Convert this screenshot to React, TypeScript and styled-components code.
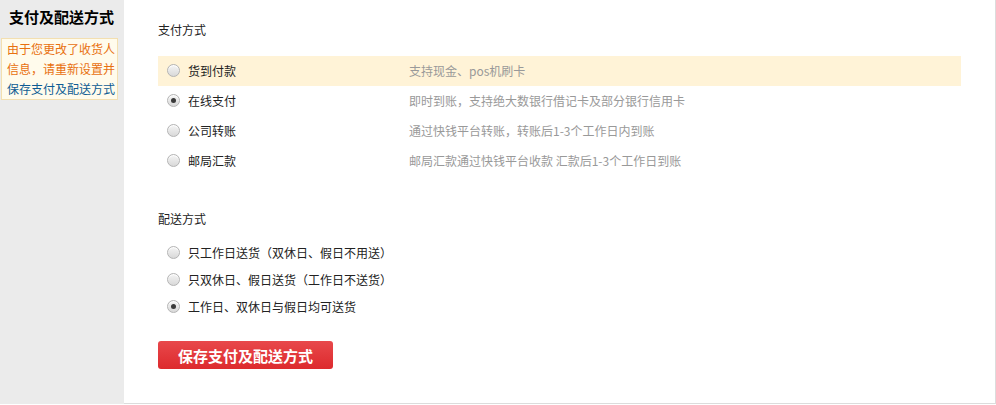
import * as React from 'react';
import { FC } from 'react';
import styled, { createGlobalStyle } from 'styled-components';

const GlobalStyle = createGlobalStyle`
    html, body {
        margin: 0;
        padding: 0;
        background: #fff;
    }
    body {
        font-family: "Noto Sans CJK SC", "Liberation Sans", sans-serif;
        font-size: 12px;
        color: #333;
    }
`;

const Page = styled.div`
    display: flex;
    width: 996px;
    height: 404px;
`;

const Sidebar = styled.aside`
    width: 124px;
    flex-shrink: 0;
    background: #ebebeb;
    display: flex;
    flex-direction: column;
    align-items: flex-start;
`;

const SideTitle = styled.h2`
    margin: 0;
    padding: 6px 0 0 9px;
    height: 32px;
    box-sizing: border-box;
    font-size: 15px;
    font-weight: bold;
    line-height: 22px;
    color: #000;
`;

const Notice = styled.div`
    margin: 6px 0 0 1px;
    width: 117px;
    box-sizing: border-box;
    padding: 0 0 0 5px;
    background: #fffbec;
    border: 1px solid #f3dfb0;
    font-size: 12px;
    line-height: 20px;
    color: #e8700f;

    .blue {
        color: #0e5b93;
    }
`;

const Main = styled.main`
    flex: 1;
    background: #fff;
    border-right: 1px solid #dcdcdc;
    border-bottom: 1px solid #dcdcdc;
    padding: 20px 34px 0;
`;

const SectionTitle = styled.h3<{ $gap: number }>`
    margin: ${ p => p.$gap }px 0 0;
    font-size: 12px;
    font-weight: normal;
    line-height: 20px;
    color: #222;
`;

const OptionList = styled.div<{ $top: number }>`
    margin-top: ${ p => p.$top }px;
    display: flex;
    flex-direction: column;
`;

const Option = styled.label<{ $height: number; $active?: boolean }>`
    display: flex;
    align-items: center;
    height: ${ p => p.$height }px;
    padding-left: 9px;
    padding-bottom: 2px;
    box-sizing: border-box;
    background: ${ p => p.$active ? '#fff3d7' : 'transparent' };
    cursor: pointer;
`;

const Radio = styled.span<{ $checked?: boolean }>`
    width: 11px;
    height: 11px;
    border-radius: 50%;
    border: 1px solid #b4b4b4;
    background: linear-gradient(#f4f4f4, #d9d9d9);
    box-shadow: inset 0 1px 1px #fff;
    display: flex;
    align-items: center;
    justify-content: center;
    flex-shrink: 0;

    &::after {
        content: '';
        display: ${ p => p.$checked ? 'block' : 'none' };
        width: 5px;
        height: 5px;
        border-radius: 50%;
        background: #3a3a3a;
    }
`;

const Label = styled.span`
    margin-left: 8px;
    width: 221px;
    color: #222;
`;

const Desc = styled.span`
    color: #999;
`;

const SaveButton = styled.button`
    margin-top: 20px;
    width: 175px;
    height: 28px;
    border: none;
    border-radius: 3px;
    background: linear-gradient(#e8484b, #dd2a2d);
    color: #fff;
    font-family: "Noto Sans CJK SC", sans-serif;
    font-size: 15px;
    font-weight: bold;
    cursor: pointer;
`;

const payments = [
    { label: '货到付款', desc: '支持现金、pos机刷卡', active: true },
    { label: '在线支付', desc: '即时到账，支持绝大数银行借记卡及部分银行信用卡', checked: true },
    { label: '公司转账', desc: '通过快钱平台转账，转账后1-3个工作日内到账' },
    { label: '邮局汇款', desc: '邮局汇款通过快钱平台收款 汇款后1-3个工作日到账' },
];

const deliveries = [
    { label: '只工作日送货（双休日、假日不用送）' },
    { label: '只双休日、假日送货（工作日不送货）' },
    { label: '工作日、双休日与假日均可送货', checked: true },
];

const App: FC = () => (
    <>
        <GlobalStyle/>
        <Page>
            <Sidebar>
                <SideTitle>支付及配送方式</SideTitle>
                <Notice>
                    由于您更改了收货人<br/>
                    信息，请重新设置并<br/>
                    <span className="blue">保存支付及配送方式</span>
                </Notice>
            </Sidebar>
            <Main>
                <SectionTitle $gap={ 0 }>支付方式</SectionTitle>
                <OptionList $top={ 16 }>
                    { payments.map( p => (
                        <Option key={ p.label } $height={ 30 } $active={ p.active }>
                            <Radio $checked={ p.checked }/>
                            <Label>{ p.label }</Label>
                            <Desc>{ p.desc }</Desc>
                        </Option>
                    ) ) }
                </OptionList>
                <SectionTitle $gap={ 33 }>配送方式</SectionTitle>
                <OptionList $top={ 11 }>
                    { deliveries.map( d => (
                        <Option key={ d.label } $height={ 27 }>
                            <Radio $checked={ d.checked }/>
                            <Label>{ d.label }</Label>
                        </Option>
                    ) ) }
                </OptionList>
                <SaveButton>保存支付及配送方式</SaveButton>
            </Main>
        </Page>
    </>
);

export default App;
